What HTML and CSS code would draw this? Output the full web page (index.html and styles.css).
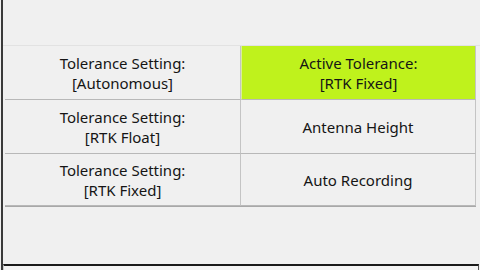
FILE: index.html
```html
<!doctype html>
<html>
<head>
  <meta charset="utf-8">
  <meta name="viewport" content="width=device-width,initial-scale=1">
  <title>Tolerance</title>
  <link rel="stylesheet" href="styles.css">
</head>
<body>
  <div id="frame">
    <div class="top-space"></div>
    <div class="grid">
      <button class="cell">Tolerance Setting:<br>[Autonomous]</button>
      <button class="cell active">Active Tolerance:<br>[RTK Fixed]</button>
      <button class="cell">Tolerance Setting:<br>[RTK Float]</button>
      <button class="cell">Antenna Height</button>
      <button class="cell">Tolerance Setting:<br>[RTK Fixed]</button>
      <button class="cell">Auto Recording</button>
    </div>
    <div class="filler"></div>
    <div class="bottom-box"></div>
  </div>
</body>
</html>
```

FILE: styles.css
```css
html, body {
  margin: 0;
  height: 100%;
  background: #f0f0f0;
  font-family: "Noto Sans", "Open Sans", sans-serif;
  overflow: hidden;
}

#frame {
  height: 270px;
  border-left: 2px solid #3a3a3a;
  margin-left: 1px;
  display: flex;
  flex-direction: column;
}

.top-space {
  height: 45px;
  flex: none;
  border-bottom: 1px solid #e2e2e2;
}

.grid {
  display: grid;
  flex: none;
  grid-template-columns: 236px 235px;
  grid-template-rows: 54px 54px 52px;
  margin-left: 2px;
  border-bottom: 1px solid #a8a8a8;
  width: 471px;
}

.cell {
  margin: 0;
  padding: 0;
  border: 0;
  border-right: 1px solid #c4c4c4;
  border-bottom: 1px solid #b8b8b8;
  background: #f0f0f0;
  color: #151515;
  font-family: "Noto Sans", "Open Sans", sans-serif;
  font-size: 15px;
  line-height: 20px;
  text-align: center;
}

.cell.active {
  background: #bff21c;
  border-left: 1px solid #d8ef9a;
}

.filler {
  height: 57px;
  flex: none;
}

.bottom-box {
  flex: 1;
  margin-right: 1px;
  border-top: 2px solid #1a1a1a;
  border-right: 1px solid #555;
  border-left: 1px solid #ccc;
  background: #f4f4f4;
}
```
